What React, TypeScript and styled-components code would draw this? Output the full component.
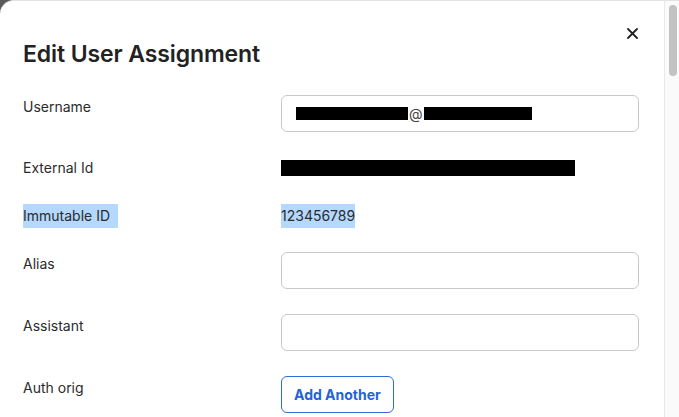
import React from 'react';
import styled, { createGlobalStyle } from 'styled-components';

const GlobalStyle = createGlobalStyle`
  html, body {
    margin: 0;
    padding: 0;
    background: #5a5a5a;
    overflow: hidden;
  }
  body {
    font-family: Inter, 'Noto Sans', 'Liberation Sans', sans-serif;
  }
`;

const Backdrop = styled.div`
  width: 679px;
  height: 417px;
  background: #5a5a5a;
`;

const Dialog = styled.div`
  display: flex;
  width: 100%;
  height: 100%;
  box-sizing: border-box;
  background: #fff;
  border-top: 1px solid #e3e3e3;
  border-top-left-radius: 14px;
  overflow: hidden;
`;

const Content = styled.div`
  flex: 1;
  box-sizing: border-box;
  padding: 39px 25px 0 23px;
  color: #2b2b2b;
`;

const Header = styled.div`
  display: flex;
  justify-content: space-between;
  align-items: flex-start;
  margin-bottom: 27px;
`;

const Title = styled.h2`
  margin: 0;
  font-size: 23px;
  line-height: 28px;
  font-weight: 600;
  color: #222;
  letter-spacing: -0.1px;
`;

const CloseButton = styled.button`
  display: flex;
  align-items: center;
  justify-content: center;
  width: 12px;
  height: 12px;
  margin: -13px 1px 0 0;
  padding: 0;
  border: none;
  background: none;
  cursor: pointer;
`;

const Form = styled.div`
  display: grid;
  grid-template-columns: 258px 1fr;
  row-gap: 24px;
  align-items: start;
`;

const Label = styled.div<{ $loose?: boolean }>`
  font-size: 14px;
  line-height: 24px;
  height: 24px;
  color: #2b2b2b;
  margin-top: ${({ $loose }) => ($loose ? '1px' : '0')};
`;

const Value = styled.div`
  font-size: 14px;
  line-height: 24px;
  height: 24px;
  display: flex;
  align-items: center;
  color: #2b2b2b;
`;

const Selected = styled.span<{ $pad?: number }>`
  display: inline-block;
  vertical-align: top;
  line-height: 24px;
  background: #b4d8fe;
  padding-right: ${({ $pad }) => $pad ?? 0}px;
`;

const FieldBox = styled.div`
  display: flex;
  align-items: center;
  box-sizing: border-box;
  height: 37px;
  padding: 0 14px;
  border: 1px solid #c9c9c9;
  border-radius: 6px;
  background: #fff;
  font-size: 14px;
  color: #333;
`;

const TextInput = styled.input<{ $loose?: boolean }>`
  display: block;
  box-sizing: border-box;
  width: 100%;
  height: 37px;
  margin-top: ${({ $loose }) => ($loose ? '1px' : '0')};
  padding: 0 14px;
  border: 1px solid #c9c9c9;
  border-radius: 6px;
  background: #fff;
  font-family: inherit;
  font-size: 14px;
  outline: none;
`;

const Redacted = styled.span<{ $w: number; $h: number }>`
  display: inline-block;
  width: ${({ $w }) => $w}px;
  height: ${({ $h }) => $h}px;
  background: #000;
`;

const At = styled.span`
  font-size: 14px;
  line-height: 14px;
  color: #444;
  margin: 0 1px;
`;

const ButtonCell = styled.div`
  margin-top: 1px;
`;

const AddButton = styled.button`
  height: 37px;
  padding: 0 12px;
  border: 1px solid #2f6ad9;
  border-radius: 6px;
  background: #fff;
  color: #2463d4;
  font-family: inherit;
  font-size: 14px;
  font-weight: 700;
  cursor: pointer;
`;

const ScrollTrack = styled.div`
  width: 15px;
  flex-shrink: 0;
  box-sizing: border-box;
  padding: 4px 3px 0 4px;
  border-left: 1px solid #e8e8e8;
  background: #fafafa;
`;

const ScrollThumb = styled.div`
  width: 8px;
  height: 71px;
  border-radius: 4px;
  background: #c2c2c2;
`;

const CloseIcon = () => (
  <svg width="11" height="11" viewBox="0 0 11 11" fill="none">
    <path d="M1 1L10 10M10 1L1 10" stroke="#222" strokeWidth="1.8" strokeLinecap="round" />
  </svg>
);

export default function App() {
  return (
    <>
      <GlobalStyle />
      <Backdrop>
        <Dialog>
          <Content>
            <Header>
              <Title>Edit User Assignment</Title>
              <CloseButton aria-label="Close">
                <CloseIcon />
              </CloseButton>
            </Header>
            <Form>
              <Label>Username</Label>
              <FieldBox>
                <Redacted $w={112} $h={13} />
                <At>@</At>
                <Redacted $w={108} $h={13} />
              </FieldBox>

              <Label>External Id</Label>
              <Value>
                <Redacted $w={294} $h={16} />
              </Value>

              <Label>
                <Selected $pad={8}>Immutable ID</Selected>
              </Label>
              <Value>
                <Selected>123456789</Selected>
              </Value>

              <Label>Alias</Label>
              <TextInput type="text" />

              <Label $loose>Assistant</Label>
              <TextInput type="text" $loose />

              <Label $loose>Auth orig</Label>
              <ButtonCell>
                <AddButton>Add Another</AddButton>
              </ButtonCell>
            </Form>
          </Content>
          <ScrollTrack>
            <ScrollThumb />
          </ScrollTrack>
        </Dialog>
      </Backdrop>
    </>
  );
}
